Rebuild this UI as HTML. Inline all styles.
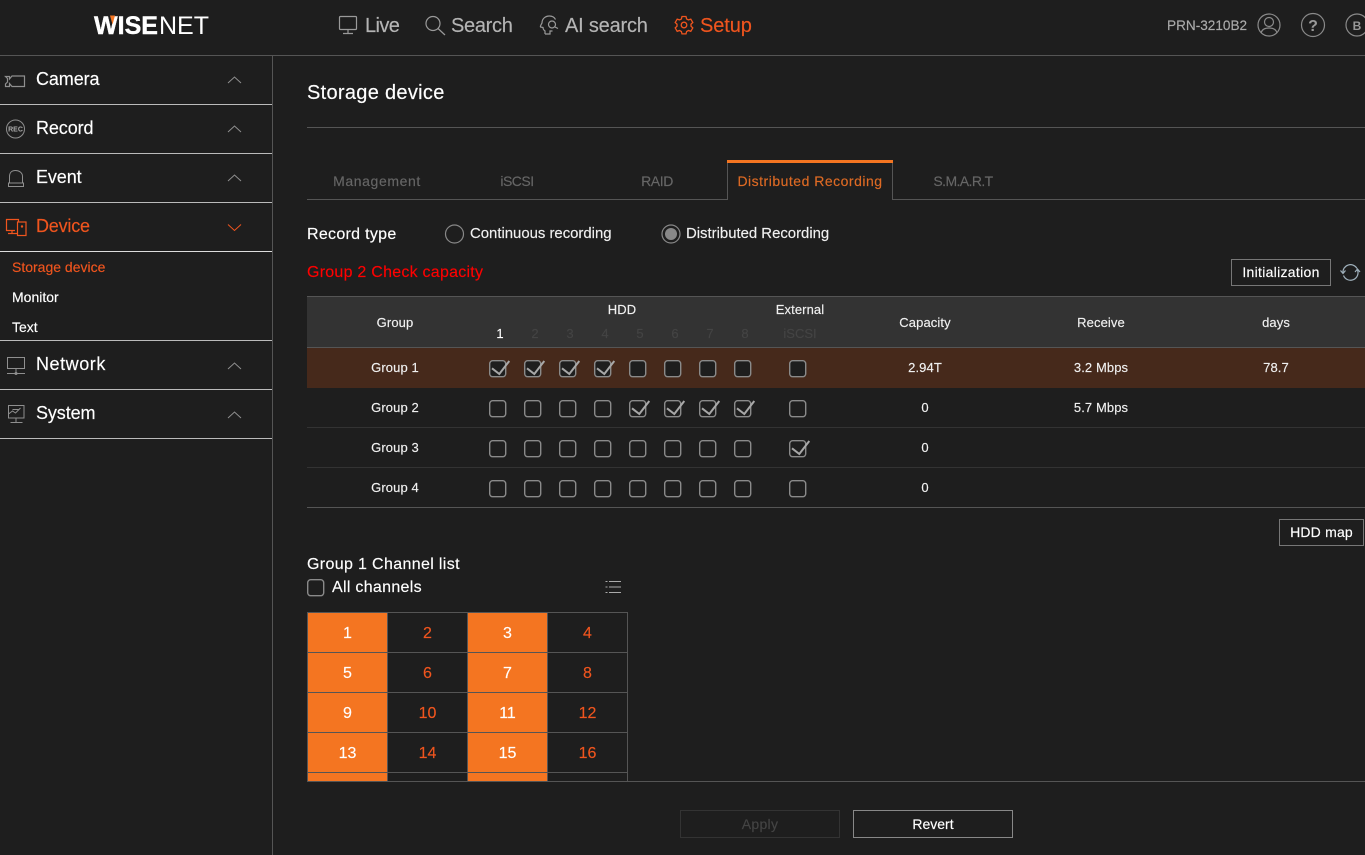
<!DOCTYPE html>
<html lang="en">
<head>
<meta charset="utf-8">
<title>Storage device</title>
<style>
html,body{margin:0;padding:0;background:#1e1e1e;}
body{position:relative;width:1365px;height:855px;overflow:hidden;font-family:"Liberation Sans",sans-serif;color:#fff;-webkit-text-stroke:.15px;}
.t{position:absolute;white-space:nowrap;line-height:20px;height:20px;}
.c{transform:translateX(-50%);}
.l{position:absolute;}
.nav{font-size:20px;color:#b4b4b4;top:16px;}
.side{font-size:18px;left:36px;}
.sub{font-size:14px;left:12px;}
.tab{font-size:14px;color:#666;top:171px;}
.th{font-size:13px;color:#f0f0f0;letter-spacing:.1px;}
.num{font-size:13px;color:#444;top:324px;}
.td{font-size:13px;color:#f0f0f0;letter-spacing:.1px;}
.btn{position:absolute;box-sizing:border-box;border:1px solid #777;text-align:center;font-size:14px;line-height:25px;color:#fff;background:#1e1e1e;}
.cell{position:absolute;box-sizing:border-box;width:81px;height:41px;border:1px solid #555;text-align:center;font-size:16px;line-height:41px;color:#f0551e;}
.on{background:#f47521;color:#fff;}
svg{position:absolute;left:0;top:0;overflow:visible;-webkit-text-stroke:0;}
</style>
</head>
<body>
<div class="l" style="left:0;top:55px;width:1365px;height:1px;background:#555"></div>
<div class="l" style="left:272px;top:56px;width:1px;height:799px;background:#555"></div>

<!-- logo -->
<svg width="1365" height="55" style="font-family:'Liberation Sans',sans-serif">
<text x="94" y="34" font-size="25" font-weight="700" fill="#fff" stroke="#fff" stroke-width=".4" textLength="64" lengthAdjust="spacingAndGlyphs">WISE</text>
<text x="159" y="34" font-size="25" fill="#fff" textLength="50" lengthAdjust="spacingAndGlyphs">NET</text>
<path d="M110 15.500h5l-2.500 9z" fill="#f47521"/>
<g fill="none" stroke="#9a9a9a" stroke-width="1.200">
<!-- live -->
<rect x="339.500" y="16.500" width="17" height="13" rx="1"/><path d="M348 29.500v4M343 33.500h10"/>
<!-- search -->
<circle cx="433" cy="23.500" r="7"/><path d="M438 28.500l7 6.500"/>
<!-- ai -->
<path d="M545 34v-3c-1.500-1-2-2-2-3.500l-2.500-.5c-.5-1 1-3 1.500-4 0-4 3-7 7.500-7 3 0 5 1.500 6 3.500M545 34h5v-3h2.500"/><circle cx="552" cy="24.500" r="3.500"/><path d="M555 27l3 1.500"/>
<!-- account -->
<g stroke="#8a8a8a"><circle cx="1269" cy="25" r="11"/><circle cx="1269" cy="22" r="4.500"/><path d="M1261 33c1-4 4-5 8-5s7 1 8 5"/>
<circle cx="1313" cy="25" r="11.500"/><circle cx="1357" cy="25" r="11"/></g>
</g>
<!-- gear -->
<g fill="none" stroke="#f0551e" stroke-width="1.300">
<circle cx="684" cy="25" r="2.800"/>
<path d="M682 16.500h4l.6 2.400 1.800 1 2.400-.8 2 3.400-1.800 1.700v2l1.800 1.700-2 3.400-2.400-.8-1.800 1-.6 2.400h-4l-.6-2.400-1.800-1-2.400.8-2-3.400 1.800-1.700v-2l-1.800-1.700 2-3.400 2.400.8 1.800-1z"/>
</g>
<text x="1313" y="31" font-size="16" font-weight="700" fill="#999" text-anchor="middle">?</text>
<text x="1357" y="30" font-size="12" font-weight="700" fill="#999" text-anchor="middle">B</text>
</svg>

<div class="t nav" style="left:365px;letter-spacing:-.6px">Live</div>
<div class="t nav" style="left:451px;letter-spacing:-.3px">Search</div>
<div class="t nav" style="left:565px;letter-spacing:-.2px">AI search</div>
<div class="t nav" style="left:700px;color:#f0551e;letter-spacing:-.1px">Setup</div>
<div class="t" style="left:1167px;top:16px;font-size:13.600px;color:#aaa">PRN-3210B2</div>

<!-- sidebar -->
<div class="l" style="left:0;top:104px;width:272px;height:1px;background:#bbb"></div>
<div class="l" style="left:0;top:153px;width:272px;height:1px;background:#bbb"></div>
<div class="l" style="left:0;top:202px;width:272px;height:1px;background:#bbb"></div>
<div class="l" style="left:0;top:251px;width:272px;height:1px;background:#ddd"></div>
<div class="l" style="left:0;top:340px;width:272px;height:1px;background:#bbb"></div>
<div class="l" style="left:0;top:389px;width:272px;height:1px;background:#bbb"></div>
<div class="l" style="left:0;top:438px;width:272px;height:1px;background:#bbb"></div>

<div class="t side" style="top:69px;letter-spacing:-.1px">Camera</div>
<div class="t side" style="top:118px;letter-spacing:-.1px">Record</div>
<div class="t side" style="top:167px;letter-spacing:-.1px">Event</div>
<div class="t side" style="top:216px;color:#f0551e;letter-spacing:-.2px">Device</div>
<div class="t side" style="top:354px;letter-spacing:.55px">Network</div>
<div class="t side" style="top:403px;letter-spacing:-.1px">System</div>
<div class="t sub" style="top:257px;color:#f0551e">Storage device</div>
<div class="t sub" style="top:287px">Monitor</div>
<div class="t sub" style="top:317px">Text</div>

<svg width="280" height="440" style="font-family:'Liberation Sans',sans-serif">
<g fill="none" stroke="#8f8f8f" stroke-width="1">
<path d="M228 83l6.500-6 6.500 6M228 132l6.500-6 6.500 6M228 181l6.500-6 6.500 6M228 369l6.500-6 6.500 6M228 418l6.500-6 6.500 6"/>
<path d="M5.500 76.500h4v2.500l2.500-3h12.500v10.500h-12.500l-2.500-3v3h-4v-2.500l2-2v-3.500l-2-2z" stroke-width="1.200"/>
<circle cx="15.500" cy="129" r="9"/>
<path d="M8.500 186.500v-3.500h15v3.500zM9.500 183v-6.500c0-4 2.500-6 6-6s7 2 7 6v6.500"/>
<rect x="7.500" y="357.500" width="17" height="11"/><path d="M7 373.500h18M16 368.500v5"/>
<rect x="8.500" y="405.500" width="15.500" height="12.500"/><path d="M8.500 414l4-3 3 2 5-5M12.500 409.500h6M16 418v4M10.500 422.500h12"/>
</g>
<circle cx="16" cy="373.500" r="1.500" fill="#8f8f8f"/>
<text x="15.500" y="131.500" font-size="7" font-weight="700" fill="#aaa" text-anchor="middle">REC</text>
<g fill="none" stroke="#f0551e" stroke-width="1.200">
<path d="M228 224.500l6.500 6 6.500-6" stroke-width="1"/>
<path d="M15 230.500h-8.500v-11h12v3M12 230.500v3.500M8 233.500h9"/>
<rect x="17.500" y="222" width="8.500" height="13.500"/><circle cx="22" cy="226.500" r=".6"/>
</g>
</svg>

<!-- title -->
<div class="t" style="left:307px;top:83px;font-size:20px;letter-spacing:.3px">Storage device</div>
<div class="l" style="left:307px;top:127px;width:1058px;height:1px;background:#555"></div>

<!-- tabs -->
<div class="l" style="left:307px;top:199px;width:420px;height:1px;background:#555"></div>
<div class="l" style="left:892px;top:199px;width:473px;height:1px;background:#555"></div>
<div class="l" style="left:727px;top:160px;width:166px;height:3px;background:#f47521"></div>
<div class="l" style="left:727px;top:163px;width:1px;height:37px;background:#555"></div>
<div class="l" style="left:892px;top:163px;width:1px;height:37px;background:#555"></div>
<div class="t tab c" style="left:377px;letter-spacing:.6px">Management</div>
<div class="t tab c" style="left:517px;letter-spacing:-.5px">iSCSI</div>
<div class="t tab c" style="left:657px;letter-spacing:-.4px">RAID</div>
<div class="t tab c" style="left:810px;color:#dd6a24;letter-spacing:.5px">Distributed Recording</div>
<div class="t tab c" style="left:963px;letter-spacing:-.6px">S.M.A.R.T</div>

<!-- record type -->
<div class="t" style="left:307px;top:225px;font-size:16px;letter-spacing:.3px">Record type</div>
<div class="t" style="left:470px;top:224px;font-size:14.900px;color:#f0f0f0">Continuous recording</div>
<div class="t" style="left:686px;top:224px;font-size:14.900px;color:#f0f0f0">Distributed Recording</div>
<svg width="1365" height="300">
<circle cx="454.500" cy="234" r="9" fill="none" stroke="#888" stroke-width="1.200"/>
<circle cx="671" cy="234" r="9" fill="none" stroke="#888" stroke-width="1.200"/>
<circle cx="671" cy="234" r="6" fill="#888"/>
<g fill="none" stroke="#9fb0bb" stroke-width="1.200"><path d="M1343 273A7.500 7.500 0 0 1 1357 268.500M1357.500 270A7.500 7.500 0 0 1 1343.500 275.500M1340.500 270.500l2.500 3 2.500-3M1355 272l2.500-3 2.500 3"/></g>
</svg>
<div class="t" style="left:307px;top:263px;font-size:16px;color:#ff0000;letter-spacing:.25px">Group 2 Check capacity</div>
<div class="btn" style="left:1231px;top:259px;width:100px;height:27px;letter-spacing:.3px">Initialization</div>

<!-- table -->
<div class="l" style="left:307px;top:296px;width:1058px;height:52px;background:#333;border-top:1px solid #555;border-bottom:1px solid #555;box-sizing:border-box"></div>
<div class="l" style="left:307px;top:348px;width:1058px;height:40px;background:#46291b"></div>
<div class="l" style="left:307px;top:427px;width:1058px;height:1px;background:#333"></div>
<div class="l" style="left:307px;top:467px;width:1058px;height:1px;background:#333"></div>
<div class="l" style="left:307px;top:507px;width:1058px;height:1px;background:#555"></div>

<div class="t th c" style="left:395px;top:313px">Group</div>
<div class="t th c" style="left:622px;top:300px">HDD</div>
<div class="t th c" style="left:800px;top:300px">External</div>
<div class="t th c" style="left:925px;top:313px">Capacity</div>
<div class="t th c" style="left:1101px;top:313px">Receive</div>
<div class="t th c" style="left:1276px;top:313px">days</div>
<div class="t num c" style="left:500px;color:#fff">1</div>
<div class="t num c" style="left:535px">2</div>
<div class="t num c" style="left:570px">3</div>
<div class="t num c" style="left:605px">4</div>
<div class="t num c" style="left:640px">5</div>
<div class="t num c" style="left:675px">6</div>
<div class="t num c" style="left:710px">7</div>
<div class="t num c" style="left:745px">8</div>
<div class="t num c" style="left:800px">iSCSI</div>

<div class="t td c" style="left:395px;top:358px">Group 1</div>
<div class="t td c" style="left:395px;top:398px">Group 2</div>
<div class="t td c" style="left:395px;top:438px">Group 3</div>
<div class="t td c" style="left:395px;top:478px">Group 4</div>
<div class="t td c" style="left:925px;top:358px">2.94T</div>
<div class="t td c" style="left:925px;top:398px">0</div>
<div class="t td c" style="left:925px;top:438px">0</div>
<div class="t td c" style="left:925px;top:478px">0</div>
<div class="t td c" style="left:1101px;top:358px">3.2 Mbps</div>
<div class="t td c" style="left:1101px;top:398px">5.7 Mbps</div>
<div class="t td c" style="left:1276px;top:358px">78.7</div>

<svg width="1365" height="600">
<defs>
<g id="b"><rect x=".7" y=".7" width="16" height="16" rx="3" fill="#1e1e1e" stroke="#8a8a8a" stroke-width="1.400"/></g>
<g id="k"><use href="#b"/><path d="M3 8.300l7.300 5.700L20.300 1" fill="none" stroke="#a8a8a8" stroke-width="2"/></g>
</defs>
<use href="#k" x="489" y="360"/><use href="#k" x="524" y="360"/><use href="#k" x="559" y="360"/><use href="#k" x="594" y="360"/>
<use href="#b" x="629" y="360"/><use href="#b" x="664" y="360"/><use href="#b" x="699" y="360"/><use href="#b" x="734" y="360"/><use href="#b" x="789" y="360"/>
<use href="#b" x="489" y="400"/><use href="#b" x="524" y="400"/><use href="#b" x="559" y="400"/><use href="#b" x="594" y="400"/>
<use href="#k" x="629" y="400"/><use href="#k" x="664" y="400"/><use href="#k" x="699" y="400"/><use href="#k" x="734" y="400"/><use href="#b" x="789" y="400"/>
<use href="#b" x="489" y="440"/><use href="#b" x="524" y="440"/><use href="#b" x="559" y="440"/><use href="#b" x="594" y="440"/>
<use href="#b" x="629" y="440"/><use href="#b" x="664" y="440"/><use href="#b" x="699" y="440"/><use href="#b" x="734" y="440"/><use href="#k" x="789" y="440"/>
<use href="#b" x="489" y="480"/><use href="#b" x="524" y="480"/><use href="#b" x="559" y="480"/><use href="#b" x="594" y="480"/>
<use href="#b" x="629" y="480"/><use href="#b" x="664" y="480"/><use href="#b" x="699" y="480"/><use href="#b" x="734" y="480"/><use href="#b" x="789" y="480"/>
<use href="#b" x="307" y="579"/>
<path d="M605.500 581.500h2M605.500 587h2M605.500 592.500h2M609 581.500h12M609 587h12M609 592.500h12" fill="none" stroke="#aaa" stroke-width="1"/>
</svg>

<div class="btn" style="left:1279px;top:519px;width:85px;height:27px;letter-spacing:.2px">HDD map</div>
<div class="t" style="left:307px;top:555px;font-size:16px;letter-spacing:.35px">Group 1 Channel list</div>
<div class="t" style="left:332px;top:578px;font-size:16px;letter-spacing:.3px">All channels</div>

<!-- channel grid -->
<div class="l" style="left:307px;top:612px;width:321px;height:169px;overflow:hidden">
<div class="cell on" style="left:0;top:0">1</div><div class="cell" style="left:80px;top:0">2</div><div class="cell on" style="left:160px;top:0">3</div><div class="cell" style="left:240px;top:0">4</div>
<div class="cell on" style="left:0;top:40px">5</div><div class="cell" style="left:80px;top:40px">6</div><div class="cell on" style="left:160px;top:40px">7</div><div class="cell" style="left:240px;top:40px">8</div>
<div class="cell on" style="left:0;top:80px">9</div><div class="cell" style="left:80px;top:80px">10</div><div class="cell on" style="left:160px;top:80px">11</div><div class="cell" style="left:240px;top:80px">12</div>
<div class="cell on" style="left:0;top:120px">13</div><div class="cell" style="left:80px;top:120px">14</div><div class="cell on" style="left:160px;top:120px">15</div><div class="cell" style="left:240px;top:120px">16</div>
<div class="cell on" style="left:0;top:160px">17</div><div class="cell" style="left:80px;top:160px">18</div><div class="cell on" style="left:160px;top:160px">19</div><div class="cell" style="left:240px;top:160px">20</div>
</div>
<div class="l" style="left:307px;top:781px;width:1058px;height:1px;background:#555"></div>

<div class="btn" style="left:680px;top:810px;width:160px;height:28px;border-color:#333;color:#444;line-height:27px;letter-spacing:.3px">Apply</div>
<div class="btn" style="left:853px;top:810px;width:160px;height:28px;border-color:#888;line-height:26px">Revert</div>
</body>
</html>
